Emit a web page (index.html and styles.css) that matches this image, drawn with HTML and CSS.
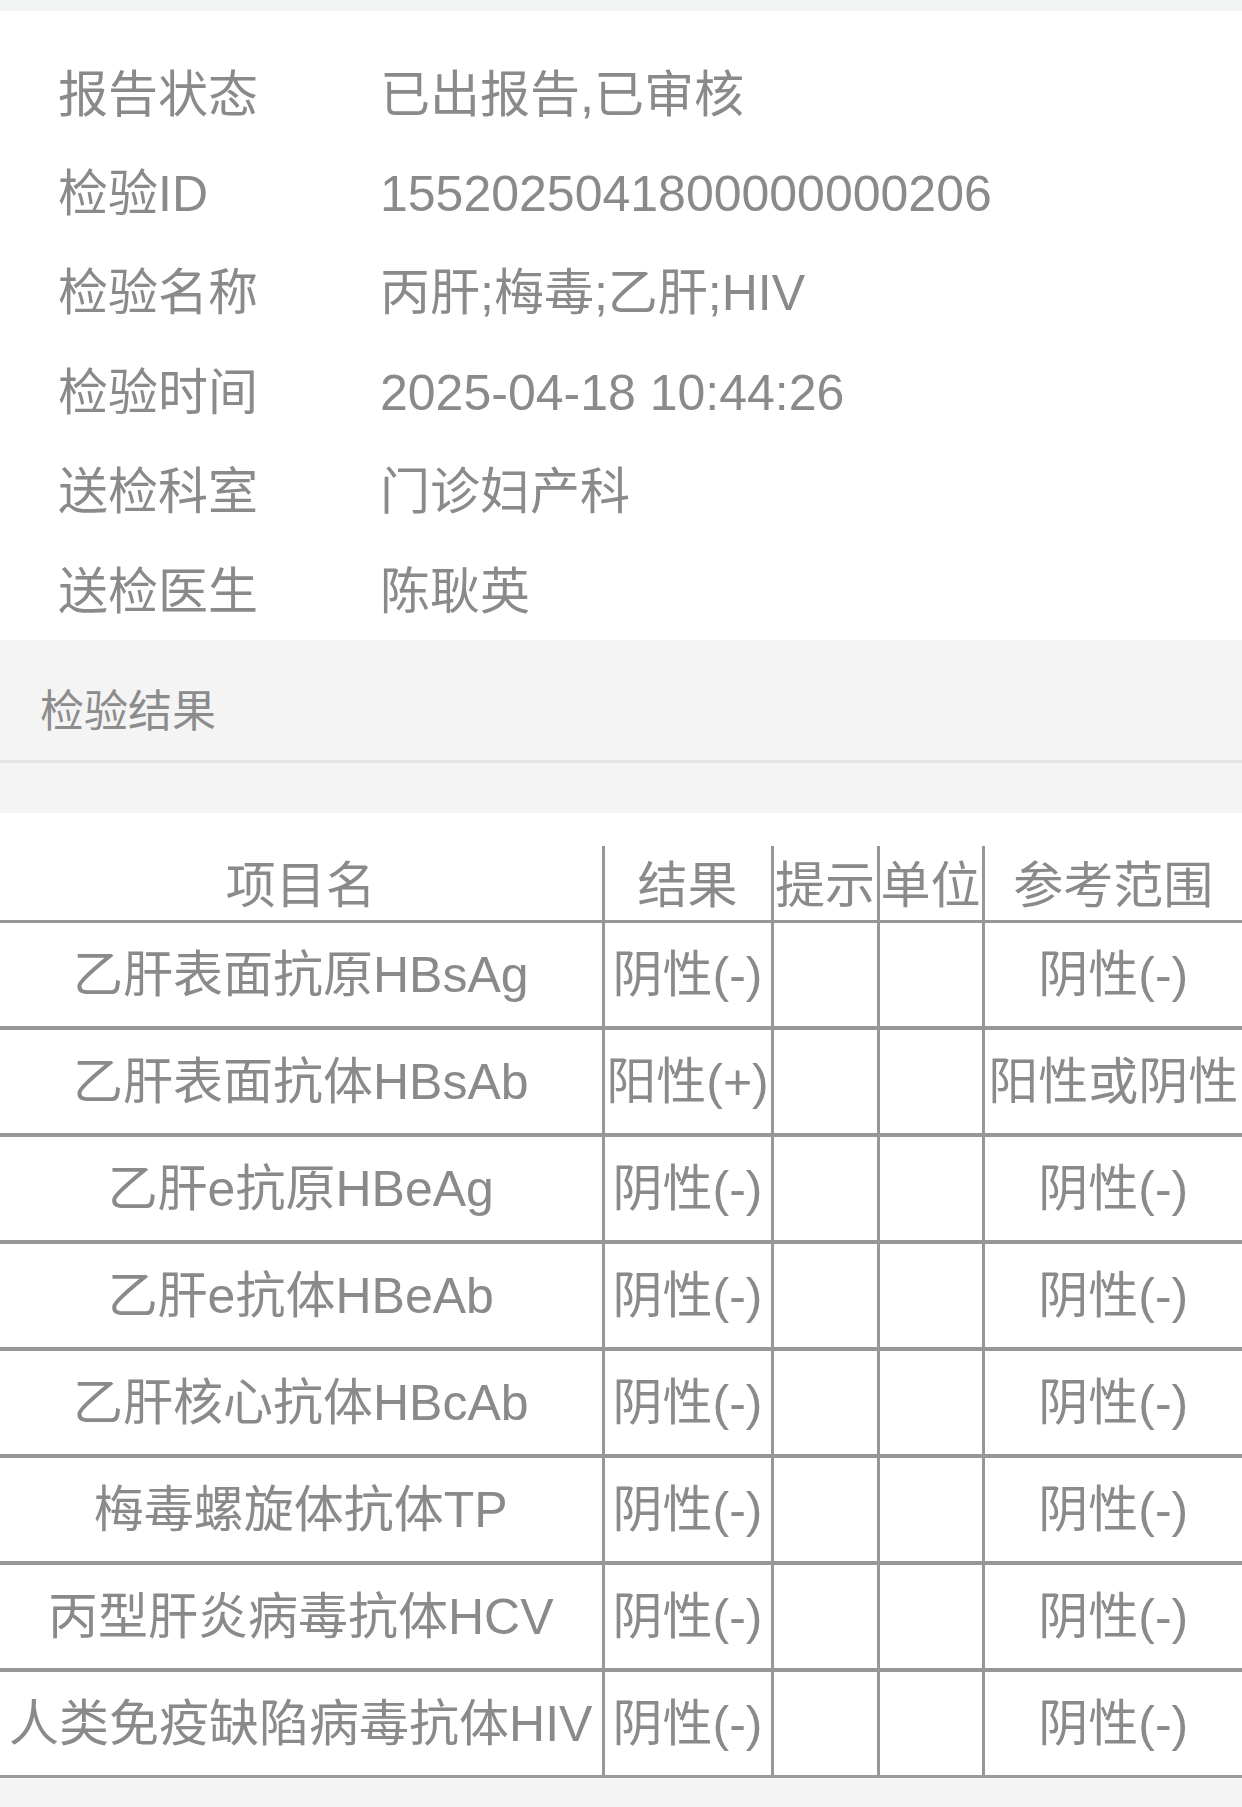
FILE: index.html
```html
<!DOCTYPE html>
<html lang="zh-CN">
<head>
<meta charset="utf-8">
<title>检验报告</title>
<link rel="stylesheet" href="styles.css">
</head>
<body>
<div class="topbar"></div>
<section class="info">
  <div class="row"><span class="label">报告状态</span><span class="value">已出报告,已审核</span></div>
  <div class="row"><span class="label">检验ID</span><span class="value">1552025041800000000206</span></div>
  <div class="row"><span class="label">检验名称</span><span class="value">丙肝;梅毒;乙肝;HIV</span></div>
  <div class="row"><span class="label">检验时间</span><span class="value">2025-04-18 10:44:26</span></div>
  <div class="row"><span class="label">送检科室</span><span class="value">门诊妇产科</span></div>
  <div class="row"><span class="label">送检医生</span><span class="value">陈耿英</span></div>
</section>
<section class="section-head">
  <div class="section-title">检验结果</div>
  <div class="section-line"></div>
  <div class="section-gap"></div>
</section>
<section class="results">
  <table class="grid">
    <colgroup>
      <col class="c1"><col class="c2"><col class="c3"><col class="c4"><col class="c5">
    </colgroup>
    <thead>
      <tr><th>项目名</th><th>结果</th><th>提示</th><th>单位</th><th>参考范围</th></tr>
    </thead>
    <tbody>
      <tr><td>乙肝表面抗原HBsAg</td><td>阴性(-)</td><td></td><td></td><td>阴性(-)</td></tr>
      <tr><td>乙肝表面抗体HBsAb</td><td>阳性(+)</td><td></td><td></td><td>阳性或阴性</td></tr>
      <tr><td>乙肝e抗原HBeAg</td><td>阴性(-)</td><td></td><td></td><td>阴性(-)</td></tr>
      <tr><td>乙肝e抗体HBeAb</td><td>阴性(-)</td><td></td><td></td><td>阴性(-)</td></tr>
      <tr><td>乙肝核心抗体HBcAb</td><td>阴性(-)</td><td></td><td></td><td>阴性(-)</td></tr>
      <tr><td>梅毒螺旋体抗体TP</td><td>阴性(-)</td><td></td><td></td><td>阴性(-)</td></tr>
      <tr><td>丙型肝炎病毒抗体HCV</td><td>阴性(-)</td><td></td><td></td><td>阴性(-)</td></tr>
      <tr><td>人类免疫缺陷病毒抗体HIV</td><td>阴性(-)</td><td></td><td></td><td>阴性(-)</td></tr>
    </tbody>
  </table>
</section>
<div class="footer"></div>
</body>
</html>
```
FILE: styles.css
```css
html, body {
  margin: 0;
  padding: 0;
  background: #f4f4f4;
}
body {
  width: 1242px;
  font-family: "Liberation Sans", "Noto Sans CJK SC", sans-serif;
  color: #8a8a8a;
  overflow: hidden;
}
.topbar {
  height: 11px;
  background: #f2f3f3;
}
.info {
  background: #ffffff;
  padding: 34px 0 0 58px;
  height: 595px;
}
.row {
  display: grid;
  grid-template-columns: 322px 1fr;
  height: 99.4px;
  align-items: center;
  font-size: 50px;
  line-height: 60px;
}
.label, .value {
  white-space: nowrap;
}
.section-head {
  background: #f4f4f4;
}
.section-title {
  padding: 50px 0 26px 40px;
  font-size: 44px;
  line-height: 44px;
  color: #8c8c8c;
}
.section-line {
  height: 3px;
  background: #e6e6e6;
}
.section-gap {
  height: 50px;
}
.results {
  background: #ffffff;
  padding-top: 33px;
}
.grid {
  border-collapse: collapse;
  table-layout: fixed;
  width: 1242px;
  font-size: 50px;
}
.c1 { width: 603px; }
.c2 { width: 169px; }
.c3 { width: 106px; }
.c4 { width: 105px; }
.c5 { width: 259px; }
.grid th,
.grid td {
  padding: 0;
  text-align: center;
  white-space: nowrap;
  overflow: visible;
  font-weight: normal;
  color: #8a8a8a;
  border-left: 3px solid #979797;
  line-height: 60px;
}
.grid th:first-child,
.grid td:first-child {
  border-left: none;
}
.grid th {
  height: 68px;
  padding-top: 6px;
  border-bottom: 3px solid #979797;
}
.grid td {
  height: 103px;
  border-bottom: 4px solid #979797;
}
.grid tbody tr:last-child td {
  border-bottom: 3px solid #9a9a9a;
}
.footer {
  height: 40px;
  background: #f4f4f4;
}
```
